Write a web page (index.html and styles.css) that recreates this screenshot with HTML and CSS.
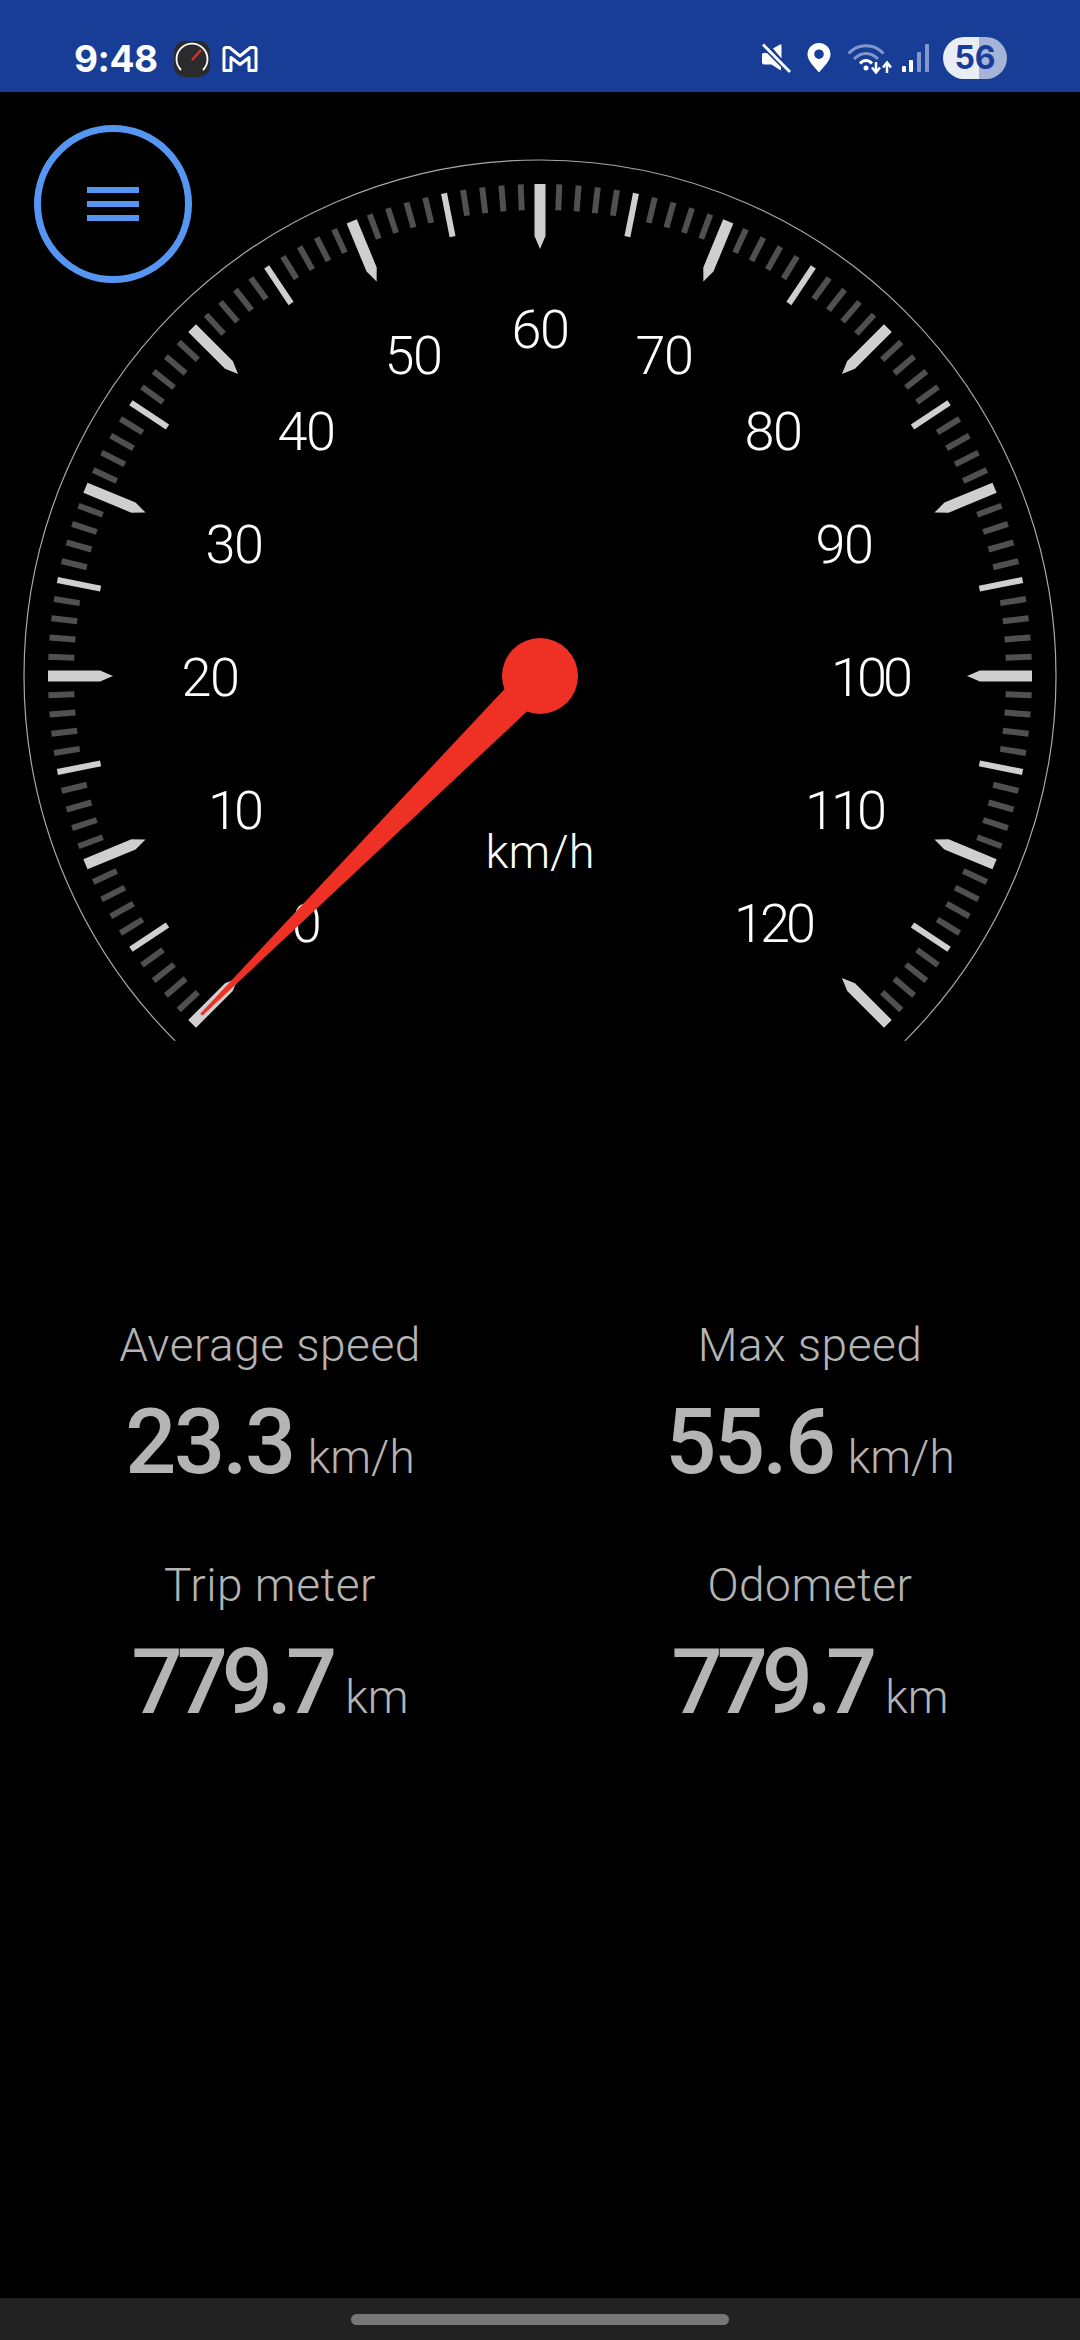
FILE: index.html
```html
<!DOCTYPE html>
<html lang="en">
<head>
    <meta charset="UTF-8">
    <meta name="viewport" content="width=device-width, initial-scale=1.0">
    <title>Speedometer</title>
    <link rel="stylesheet" href="styles.css">
</head>
<body>
    <header class="status-bar">
        <div class="status-left">
            <span class="clock">9:48</span>
            <svg class="app-icon" width="36" height="36" viewBox="0 0 36 36">
                <rect width="36" height="36" rx="11" fill="#2b2b2d"/>
                <path d="M7 29A15.5 15.5 0 1 1 29 29" fill="none" stroke="#fff" stroke-width="1.8"/>
                <path d="M18 19L27 9" stroke="#d8322c" stroke-width="2.4"/>
            </svg>
            <svg class="mail-icon" width="36" height="28" viewBox="0 0 36 28">
                <path d="M2 25V4.500Q2 2.500 4 2.500H7.500L18 11L28.500 2.500H32Q34 2.500 34 4.500V25.500H27V12.500L18 19.500L9 12.500V25.500H2Z" fill="none" stroke="#fff" stroke-width="3" stroke-linejoin="round"/>
            </svg>
        </div>
        <div class="status-right">
            <svg width="30" height="30" viewBox="0 0 30 30">
                <path d="M1 11.500Q1 10 2.500 10H6L20 24V26.500Q20 28 18.500 26.800L10.500 21.500H3Q1 21.500 1 19.500ZM12 5.500L19 1.500Q20.500 0.800 20.500 3V15.500Z" fill="#fff"/>
                <path d="M2 1.500L29 29" stroke="#fff" stroke-width="2.800"/>
            </svg>
            <svg width="24" height="30" viewBox="0 0 24 30">
                <path fill-rule="evenodd" d="M12 29.500C7 23.500 0.500 17.500 0.500 11.500A11.500 11.500 0 0 1 23.500 11.500C23.500 17.500 17 23.500 12 29.500ZM12 16A4.800 4.800 0 1 0 12 6.400A4.800 4.800 0 0 0 12 16Z" fill="#fff"/>
            </svg>
            <svg class="wifi-icon" width="46" height="32" viewBox="0 0 46 32">
                <path d="M1.500 11.500C11 1 27 1 36.500 11.500" fill="none" stroke="#8298cd" stroke-width="3"/>
                <path d="M7 17C14 9.500 24 9.500 31 17" fill="none" stroke="#8298cd" stroke-width="3"/>
                <path d="M13 21.500C16.500 17.500 21.500 17.500 25 21.500" fill="none" stroke="#fff" stroke-width="3"/>
                <circle cx="19" cy="26" r="2.500" fill="#fff"/>
                <path d="M29 20V29M25 25.500L29 30.500L33 25.500M40 31V22M36 25.500L40 20.500L44 25.500" fill="none" stroke="#fff" stroke-width="2.500"/>
            </svg>
            <svg class="signal-icon" width="27" height="30" viewBox="0 0 27 30">
                <rect x="0" y="23" width="4" height="6" rx="1" fill="#fff"/>
                <rect x="7" y="17" width="4" height="12" rx="1" fill="#fff"/>
                <rect x="15" y="9" width="4" height="20" rx="1" fill="#8298cd"/>
                <rect x="23" y="1" width="4" height="28" rx="1" fill="#8298cd"/>
            </svg>
            <div class="battery">56</div>
        </div>
    </header>

    <main class="screen">
        <section class="gauge">
            <button class="menu-btn" type="button" aria-label="Menu">
                <span></span><span></span><span></span>
            </button>
            <svg id="dial" class="dial" width="1080" height="960" viewBox="-540 -584 1080 960"></svg>
        </section>

        <section class="stats">
            <div class="stat">
                <div class="stat-label">Average speed</div>
                <div class="stat-value">23.3<small>km/h</small></div>
            </div>
            <div class="stat">
                <div class="stat-label">Max speed</div>
                <div class="stat-value">55.6<small>km/h</small></div>
            </div>
            <div class="stat">
                <div class="stat-label">Trip meter</div>
                <div class="stat-value narrow">779.7<small>km</small></div>
            </div>
            <div class="stat">
                <div class="stat-label">Odometer</div>
                <div class="stat-value narrow">779.7<small>km</small></div>
            </div>
        </section>
    </main>

    <footer class="nav-bar">
        <div class="nav-handle"></div>
    </footer>

    <script src="gauge.js"></script>
</body>
</html>
```
FILE: styles.css
```css
* {
    box-sizing: border-box;
}
body {
    font-family: Roboto, Arial, sans-serif;
    background-color: #000;
    color: #fff;
    margin: 0;
    width: 1080px;
    height: 2340px;
    display: flex;
    flex-direction: column;
    overflow: hidden;
}
.status-bar {
    height: 92px;
    flex: none;
    background-color: #173d96;
    display: flex;
    justify-content: space-between;
    padding: 0 73px 0 74px;
}
.status-left {
    display: flex;
    align-items: center;
    padding-top: 25px;
}
.clock {
    font-family: Inter, Roboto, sans-serif;
    font-size: 37px;
    font-weight: 700;
    letter-spacing: -0.5px;
    width: 100px;
}
.mail-icon {
    margin-left: 12px;
}
.status-right {
    display: flex;
    align-items: center;
    gap: 16px;
    padding-top: 23px;
}
.wifi-icon {
    margin-right: -7px;
}
.signal-icon {
    margin-right: -2px;
}
.battery {
    width: 64px;
    height: 42px;
    border-radius: 21px;
    background: linear-gradient(90deg, #e9edf6 56%, #a5b3d8 56%);
    color: #173d96;
    font-family: Inter, Roboto, sans-serif;
    font-size: 32px;
    font-weight: 700;
    line-height: 42px;
    text-align: center;
}
.screen {
    flex: 1;
}
.gauge {
    position: relative;
    height: 960px;
}
.dial {
    display: block;
}
.menu-btn {
    position: absolute;
    left: 34px;
    top: 33px;
    width: 158px;
    height: 158px;
    border: 7px solid #5596f2;
    border-radius: 50%;
    background: none;
    padding: 0;
    display: flex;
    flex-direction: column;
    align-items: center;
    justify-content: center;
    gap: 8px;
}
.menu-btn span {
    width: 52px;
    height: 6px;
    background-color: #5596f2;
}
.arc {
    fill: none;
    stroke: #a8a8a8;
    stroke-width: 1.200;
}
.tick-major, .tick-mid {
    fill: #cfcfcf;
}
.tick-minor {
    fill: #505050;
}
.dial-num {
    font-family: Roboto, sans-serif;
    font-weight: 300;
    font-size: 54px;
    letter-spacing: -1.500px;
    fill: #fff;
    text-anchor: middle;
}
.dial-num.has-one {
    letter-spacing: -4px;
}
.dial-unit {
    font-family: Roboto, sans-serif;
    font-weight: 300;
    font-size: 47px;
    fill: #fff;
    text-anchor: middle;
}
.needle, .hub {
    fill: #ee3124;
}
.stats {
    display: grid;
    grid-template-columns: 540px 540px;
    grid-auto-rows: 240px;
    margin-top: 267px;
}
.stat {
    text-align: center;
    color: #b4b4b4;
}
.stat-label {
    font-weight: 300;
    font-size: 46px;
    line-height: 52px;
    letter-spacing: 0.5px;
}
.stat-value {
    font-weight: 500;
    font-size: 90px;
    line-height: 100px;
    letter-spacing: -2.500px;
    margin-top: 22px;
}
.stat-value.narrow {
    letter-spacing: -6px;
}
.stat-value small {
    font-weight: 300;
    font-size: 46px;
    letter-spacing: 0;
    margin-left: 14px;
}
.nav-bar {
    height: 42px;
    flex: none;
    background-color: #222;
    display: flex;
    justify-content: center;
    padding-top: 16px;
}
.nav-handle {
    width: 378px;
    height: 11px;
    border-radius: 6px;
    background-color: #777;
}
```
FILE: gauge.js
```js
// Draws the dial: 0-120 km/h over 270 degrees, one tick per km/h
const dial = document.getElementById('dial');
const NS = 'http://www.w3.org/2000/svg';

function add(tag, attrs, text) {
    const el = document.createElementNS(NS, tag);
    for (const key in attrs) {
        el.setAttribute(key, attrs[key]);
    }
    if (text) {
        el.textContent = text;
    }
    dial.appendChild(el);
    return el;
}

const R = 516;
const end = R * Math.SQRT1_2;
add('path', { class: 'arc', d: `M${-end} ${end}A${R} ${R} 0 1 1 ${end} ${end}` });

for (let speed = 0; speed <= 120; speed++) {
    const angle = speed * 2.25 - 135;
    let cls = 'tick-minor';
    let points = '-3,-492 3,-492 3,-466 -3,-466';
    if (speed % 10 === 0) {
        cls = 'tick-major';
        points = '-5.500,-492 5.500,-492 5.500,-440 0,-427 -5.500,-440';
    } else if (speed % 5 === 0) {
        cls = 'tick-mid';
        points = '-3,-492 3,-492 3,-448 -3,-448';
    }
    add('polygon', { class: cls, points: points, transform: `rotate(${angle})` });
}

// centre of each number relative to the hub
const labels = [
    ['0', -234, 246], ['10', -306, 133], ['20', -330, 0], ['30', -306, -133],
    ['40', -234, -246], ['50', -127, -322], ['60', 0, -348], ['70', 124, -322],
    ['80', 233, -246], ['90', 304, -133], ['100', 330, 0], ['110', 304, 133],
    ['120', 233, 246]
];
labels.forEach(l => {
    const cls = l[0].includes('1') ? 'dial-num has-one' : 'dial-num';
    add('text', { class: cls, x: l[1], y: l[2] + 19.5 }, l[0]);
});
add('text', { class: 'dial-unit', x: 0, y: 192 }, 'km/h');

// needle sits on 0 km/h
add('polygon', { class: 'needle', points: '-17,0 17,0 1.500,-479 -1.500,-479', transform: 'rotate(-135)' });
add('circle', { class: 'hub', cx: 0, cy: 0, r: 38 });
```
